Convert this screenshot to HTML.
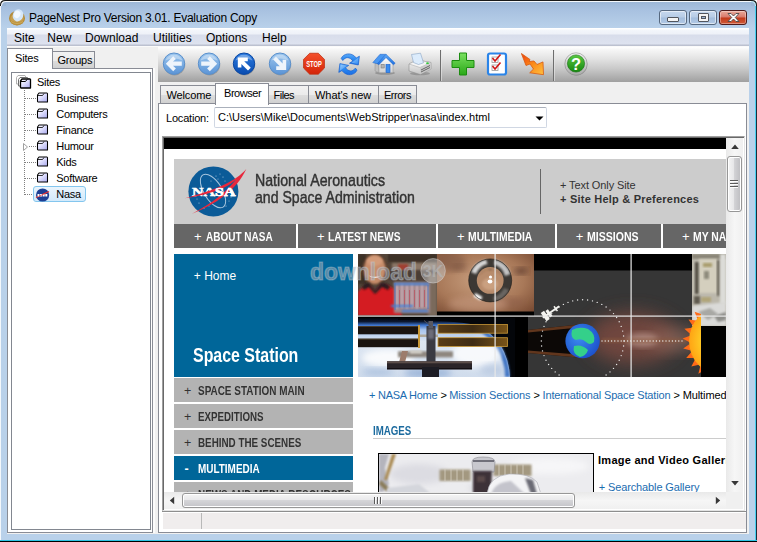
<!DOCTYPE html>
<html>
<head>
<meta charset="utf-8">
<title>PageNest Pro</title>
<style>
html,body{margin:0;padding:0;}
body{width:757px;height:542px;overflow:hidden;background:#b9d1ea;font-family:"Liberation Sans",sans-serif;font-size:11px;color:#000;position:relative;}
div,span{position:absolute;box-sizing:border-box;}
span{white-space:nowrap}
/* frame */
#titlegrad{left:0;top:0;width:757px;height:28px;background:linear-gradient(#9ab5d5 0,#a8c1e0 35%,#b9d1ea 100%);}
#frameL{left:0;top:0;width:1px;height:541px;background:#f4f8fc}
#frameT{left:0;top:0;width:757px;height:1px;background:#1a1a1a}
#frameT2{left:1px;top:1px;width:755px;height:1px;background:#f4f8fc}
#frameR{left:756px;top:0;width:1px;height:542px;background:#1c2c3c}
#frameR2{left:755px;top:2px;width:1px;height:539px;background:#48d0f0}
#frameB{left:0;top:540px;width:757px;height:1px;background:#2cc4e4}
#frameB2{left:0;top:541px;width:757px;height:1px;background:#000}
#title{left:29px;top:9.500px;font-size:12px;line-height:16px;color:#000;letter-spacing:-0.26px}
#menubar{left:7px;top:28px;width:742px;height:18px;background:linear-gradient(#ffffff 0,#ffffff 1px,#f3f6fb 2px,#eef1f8 6px,#d8ddeb 7px,#dde2ef 16px,#bcc1d0 17px,#bcc1d0 18px);}
#menubar span{top:3px;font-size:12px;line-height:15px;}
#client{left:7px;top:46px;width:742px;height:488px;background:#f0f0f0;border-top:1px solid #fafafa}
.t11{font-size:11px;line-height:13px;}
/* left panel */
#ltabSites{left:7px;top:48px;width:46px;height:21px;background:#fff;border:1px solid #898c95;border-bottom:none;z-index:3}
#ltabGroups{left:52px;top:51px;width:43px;height:18px;background:linear-gradient(#f2f2f2 0,#ebebeb 50%,#dddddd 50%,#cfcfcf 100%);border:1px solid #898c95;border-bottom:none;}
#lpanel{left:7px;top:68px;width:146px;height:465px;background:#fff;border:1px solid #898c95;}
#tree{left:11px;top:72px;width:140px;height:458px;background:#fff;border:1px solid #828790;}
.ti{left:0;height:16px;font-size:11px;line-height:16px;}
/* right */
#toolbar{left:158px;top:47px;width:591px;height:35.300px;background:linear-gradient(#ffffff 0,#f6f6f6 8%,#e4e4e4 32%,#cbcbcb 60%,#b0b0b0 85%,#a0a0a0 100%);}
#rpanel{left:158px;top:103px;width:589px;height:430px;background:#fff;border:1px solid #898c95;}
.rtab{top:85px;height:19px;background:linear-gradient(#f2f2f2 0,#ebebeb 50%,#dddddd 50%,#cfcfcf 100%);border:1px solid #898c95;border-bottom:none;font-size:11px;line-height:16px;text-align:center;white-space:nowrap}
.rtab.act{top:83px;height:22px;background:#fff;z-index:3;}
.rtab span{top:3px;font-size:11px;line-height:13px}

.fold{width:11px;height:9px;}
.tl{font-size:11px;line-height:13px;letter-spacing:-0.3px}
.hdot{height:1px;background-image:linear-gradient(90deg,#808080 1px,transparent 1px);background-size:2px 1px;}
.vdot{width:1px;background-image:linear-gradient(#808080 1px,transparent 1px);background-size:1px 2px;}

/* browser */
#loc{left:166px;top:112px;font-size:11px;line-height:13px;letter-spacing:-0.2px}
#combo{left:214px;top:107px;width:333px;height:21px;background:#fff;border:1px solid #d0d7e3;border-top-color:#aab0bb;border-radius:2px}
#combo span{left:3px;top:3px;font-size:11px;line-height:13px}
#bview{left:162px;top:136px;width:583px;height:375px;background:#fff;border:1px solid #a0a0a0;border-right-color:#e3e3e3;border-bottom-color:#e3e3e3;box-shadow:inset 1px 1px 0 #696969}
#page{left:164px;top:138px;width:562px;height:354px;background:#fff;overflow:hidden}
#page div,#page span{position:absolute}
.cond{transform-origin:0 50%;display:inline-block}
.nav{top:86px;height:24.400px;background:#666;}
.hd{font-size:17px;line-height:18px;color:#333;transform-origin:0 50%;-webkit-text-stroke:0.45px #333}
.nav span{color:#fff;font-weight:bold;font-size:13px;line-height:25px;top:0;transform-origin:0 50%;transform:scaleX(0.8)}
.nav .p{font-weight:normal;transform:none}
.lm{left:10px;width:179px;height:24px;background:#b3b3b3}
.lm span{top:1px;line-height:24px;font-size:12.500px;font-weight:bold;color:#333;transform-origin:0 50%;}
.lm .p{left:10px;font-weight:normal}
.lm .t{left:24px}
.bc{font-size:11px;line-height:13px;color:#1b6cb0;letter-spacing:-0.17px}
.bc i{font-style:normal;color:#000}

/* scrollbars */
.sbv{left:726px;top:138px;width:17px;height:354px;background:linear-gradient(90deg,#e9e9e9,#f6f6f6 50%,#f0f0f0)}
.sbh{left:164px;top:492px;width:562px;height:17px;background:linear-gradient(#e9e9e9,#f6f6f6 50%,#f0f0f0)}
.thv{left:727px;top:156px;width:15px;height:56px;border:1px solid #979797;border-radius:3px;background:linear-gradient(90deg,#f5f5f5 0,#e6e6e8 45%,#d2d2d5 50%,#bcbcc0 100%);box-shadow:inset 0 0 0 1px #fff}
.thh{left:182px;top:493px;width:393px;height:15px;border:1px solid #979797;border-radius:3px;background:linear-gradient(#f5f5f5 0,#e9e9eb 45%,#d5d5d8 50%,#c4c4c8 100%);box-shadow:inset 0 0 0 1px #fff}
#status{left:163px;top:513px;width:583px;height:16px;background:#f0eded}

.wb{top:10px;height:15px;border:1px solid #56687f;border-radius:3px;background:linear-gradient(#c6d8ee 0,#b7cce6 48%,#a3bddc 52%,#b3cae6 100%);box-shadow:inset 0 0 0 1px rgba(255,255,255,.55)}
.wb.cl{border-color:#4e1a1a;background:linear-gradient(#e9a99a 0,#d8796a 48%,#c2391a 52%,#cf5a38 100%);box-shadow:inset 0 0 0 1px rgba(255,255,255,.35)}
</style>
</head>
<body>
<div id="titlegrad"></div>
<div id="frameR2"></div>

<div class="wb" style="left:659px;width:28px"><div style="left:7px;top:6px;width:12px;height:5px;background:#f4f4f4;border:1px solid #52565e;border-radius:1px"></div></div>
<div class="wb" style="left:689px;width:28px"><div style="left:8px;top:2px;width:11px;height:9px;background:#f4f4f4;border:1px solid #52565e;border-radius:1px"></div><div style="left:11px;top:5px;width:5px;height:3px;background:#9db4d4;border:1px solid #52565e"></div></div>
<div class="wb cl" style="left:719px;width:28px"><svg style="position:absolute;left:7px;top:1px" width="13" height="11" viewBox="0 0 13 11"><path d="M1 1.500 L4 1.500 L6.500 4 L9 1.500 L12 1.500 L8.300 5.500 L12 9.500 L9 9.500 L6.500 7 L4 9.500 L1 9.500 L4.700 5.500z" fill="#fff" stroke="#4a4a4a" stroke-width="0.900" stroke-linejoin="round"/></svg></div>
<svg style="position:absolute;left:8px;top:8px" width="18" height="18" viewBox="0 0 18 18">
<ellipse cx="9" cy="10.200" rx="8" ry="7.200" fill="#b48c3c"/>
<ellipse cx="9" cy="11" rx="6.800" ry="5.800" fill="#c8a050"/>
<ellipse cx="10" cy="7.300" rx="5.200" ry="6.200" fill="#d4e6f8" transform="rotate(18 10 7.300)"/>
<ellipse cx="9.200" cy="6.300" rx="3.200" ry="3.800" fill="#f2f8ff" transform="rotate(18 9.200 6.300)"/>
<path d="M1.300 10.500 Q2.500 17 9 17.300 Q15.500 17 16.800 10.500 Q14 14.300 9 14.300 Q4 14.300 1.300 10.500z" fill="#b8903e"/>
<path d="M3 13.500 Q9 17.500 15 13.500" stroke="#d8b868" stroke-width="0.700" fill="none"/>
</svg>
<span id="title">PageNest Pro Version 3.01. Evaluation Copy</span>
<div id="menubar">
  <span style="left:7px">Site</span>
  <span style="left:40.300px">New</span>
  <span style="left:78px">Download</span>
  <span style="left:146px">Utilities</span>
  <span style="left:199px">Options</span>
  <span style="left:255px">Help</span>
</div>
<div id="client"></div>
<!--LEFT-->
<div id="ltabSites"><span class="t11" style="left:7px;top:3px;letter-spacing:-0.2px">Sites</span></div>
<div id="ltabGroups"><span class="t11" style="left:4.400px;top:2px;letter-spacing:-0.2px">Groups</span></div>
<div style="left:153px;top:68px;width:2px;height:465px;background:#fbfbfb"></div>
<div id="lpanel"></div>
<div id="tree"></div>
<svg style="position:absolute;left:15px;top:74px" width="18" height="16" viewBox="0 0 18 16">
<defs><linearGradient id="fgr" x1="0" y1="0" x2="1" y2="1"><stop offset="0" stop-color="#ffffff"/><stop offset="0.35" stop-color="#e8e8ff"/><stop offset="1" stop-color="#a8a8ee"/></linearGradient></defs>
<path d="M1.500 3.500 L3 1.500 L10 1.500 L10.500 2 L10.500 10 L1.500 10z" fill="#fff" stroke="#b0b0b0" stroke-width="1"/>
<path d="M3.500 5.500 L5 3.500 L12.500 3.500 L13 4 L13 12 L3.500 12z" fill="#fff" stroke="#707070" stroke-width="1"/>
<path d="M5.500 7 L7 5 L15 5 L15.500 5.500 L15.500 14 L6 14 L5.500 13.500z" fill="url(#fgr)" stroke="#000" stroke-width="1.300" stroke-linejoin="round"/>
<path d="M6 7.500 H10.500 L12 5.500" stroke="#000" stroke-width="1" fill="none"/>
</svg>
<span class="tl" style="left:37px;top:76px">Sites</span>
<div class="vdot" style="left:24px;top:90px;height:105px"></div>
<div class="hdot" style="left:25px;top:98px;width:11px"></div>
<svg style="position:absolute;left:36px;top:92px" width="13" height="11" viewBox="0 0 13 11"><defs><linearGradient id="fg0" x1="0" y1="0" x2="1" y2="1"><stop offset="0" stop-color="#ffffff"/><stop offset="0.35" stop-color="#e8e8ff"/><stop offset="1" stop-color="#a8a8ee"/></linearGradient></defs><path d="M1.500 3 L3 1 L11 1 L11.500 1.500 L11.500 10 L2 10 L1.500 9.500z" fill="url(#fg0)" stroke="#000" stroke-width="1.050" stroke-linejoin="round"/><path d="M2 3.500 H6.500 L8 1.500" stroke="#000" stroke-width="0.800" fill="none"/></svg>
<span class="tl" style="left:56.300px;top:92px">Business</span>
<div class="hdot" style="left:25px;top:114px;width:11px"></div>
<svg style="position:absolute;left:36px;top:108px" width="13" height="11" viewBox="0 0 13 11"><defs><linearGradient id="fg1" x1="0" y1="0" x2="1" y2="1"><stop offset="0" stop-color="#ffffff"/><stop offset="0.35" stop-color="#e8e8ff"/><stop offset="1" stop-color="#a8a8ee"/></linearGradient></defs><path d="M1.500 3 L3 1 L11 1 L11.500 1.500 L11.500 10 L2 10 L1.500 9.500z" fill="url(#fg1)" stroke="#000" stroke-width="1.050" stroke-linejoin="round"/><path d="M2 3.500 H6.500 L8 1.500" stroke="#000" stroke-width="0.800" fill="none"/></svg>
<span class="tl" style="left:56.300px;top:108px">Computers</span>
<div class="hdot" style="left:25px;top:130px;width:11px"></div>
<svg style="position:absolute;left:36px;top:124px" width="13" height="11" viewBox="0 0 13 11"><defs><linearGradient id="fg2" x1="0" y1="0" x2="1" y2="1"><stop offset="0" stop-color="#ffffff"/><stop offset="0.35" stop-color="#e8e8ff"/><stop offset="1" stop-color="#a8a8ee"/></linearGradient></defs><path d="M1.500 3 L3 1 L11 1 L11.500 1.500 L11.500 10 L2 10 L1.500 9.500z" fill="url(#fg2)" stroke="#000" stroke-width="1.050" stroke-linejoin="round"/><path d="M2 3.500 H6.500 L8 1.500" stroke="#000" stroke-width="0.800" fill="none"/></svg>
<span class="tl" style="left:56.300px;top:124px">Finance</span>
<div class="hdot" style="left:25px;top:146px;width:11px"></div>
<svg style="position:absolute;left:36px;top:140px" width="13" height="11" viewBox="0 0 13 11"><defs><linearGradient id="fg3" x1="0" y1="0" x2="1" y2="1"><stop offset="0" stop-color="#ffffff"/><stop offset="0.35" stop-color="#e8e8ff"/><stop offset="1" stop-color="#a8a8ee"/></linearGradient></defs><path d="M1.500 3 L3 1 L11 1 L11.500 1.500 L11.500 10 L2 10 L1.500 9.500z" fill="url(#fg3)" stroke="#000" stroke-width="1.050" stroke-linejoin="round"/><path d="M2 3.500 H6.500 L8 1.500" stroke="#000" stroke-width="0.800" fill="none"/></svg>
<span class="tl" style="left:56.300px;top:140px">Humour</span>
<div class="hdot" style="left:25px;top:162px;width:11px"></div>
<svg style="position:absolute;left:36px;top:156px" width="13" height="11" viewBox="0 0 13 11"><defs><linearGradient id="fg4" x1="0" y1="0" x2="1" y2="1"><stop offset="0" stop-color="#ffffff"/><stop offset="0.35" stop-color="#e8e8ff"/><stop offset="1" stop-color="#a8a8ee"/></linearGradient></defs><path d="M1.500 3 L3 1 L11 1 L11.500 1.500 L11.500 10 L2 10 L1.500 9.500z" fill="url(#fg4)" stroke="#000" stroke-width="1.050" stroke-linejoin="round"/><path d="M2 3.500 H6.500 L8 1.500" stroke="#000" stroke-width="0.800" fill="none"/></svg>
<span class="tl" style="left:56.300px;top:156px">Kids</span>
<div class="hdot" style="left:25px;top:178px;width:11px"></div>
<svg style="position:absolute;left:36px;top:172px" width="13" height="11" viewBox="0 0 13 11"><defs><linearGradient id="fg5" x1="0" y1="0" x2="1" y2="1"><stop offset="0" stop-color="#ffffff"/><stop offset="0.35" stop-color="#e8e8ff"/><stop offset="1" stop-color="#a8a8ee"/></linearGradient></defs><path d="M1.500 3 L3 1 L11 1 L11.500 1.500 L11.500 10 L2 10 L1.500 9.500z" fill="url(#fg5)" stroke="#000" stroke-width="1.050" stroke-linejoin="round"/><path d="M2 3.500 H6.500 L8 1.500" stroke="#000" stroke-width="0.800" fill="none"/></svg>
<span class="tl" style="left:56.300px;top:172px">Software</span>
<svg style="position:absolute;left:22px;top:141.500px" width="7" height="10" viewBox="0 0 7 10"><rect x="0" y="0" width="7" height="10" fill="#fff"/><path d="M1.500 1.500 L5.500 5 L1.500 8.500z" fill="#fff" stroke="#a0a0a0" stroke-width="1"/></svg>
<div class="hdot" style="left:25px;top:194px;width:8px"></div>
<div style="left:33px;top:186px;width:53px;height:16px;border:1px solid #84c6ee;border-radius:3px;background:linear-gradient(#ebf5fd,#d3eafb)"></div>
<svg style="position:absolute;left:35px;top:187.500px" width="15" height="15" viewBox="0 0 15 15"><circle cx="7.600" cy="7" r="6.600" fill="#1c3f94"/><path d="M1 9.500 L14 3.500" stroke="#e83030" stroke-width="1.100"/><path d="M2.500 7.300h10.200" stroke="#fff" stroke-width="2.400" stroke-dasharray="2 0.600"/><path d="M4 8.200 L11 5.200" stroke="#e83030" stroke-width="0.700"/></svg>
<span class="tl" style="left:56.300px;top:188px">Nasa</span>
<!--RIGHT-->
<div id="toolbar"></div>
<svg style="position:absolute;left:162px;top:52px" width="24" height="24" viewBox="0 0 24 24">
<defs><linearGradient id="g1" x1="0" y1="0" x2="0" y2="1"><stop offset="0" stop-color="#9cc6ee"/><stop offset="1" stop-color="#5b94d6"/></linearGradient></defs>
<ellipse cx="12.500" cy="12.800" rx="10.800" ry="10.600" fill="#000" opacity="0.18"/>
<circle cx="12" cy="11.700" r="10.700" fill="url(#g1)" stroke="#5a90cc" stroke-width="1"/>
<path d="M3.500 8.500 A9.200 9.200 0 0 1 20.500 8.500 A14 9 0 0 0 3.500 8.500z" fill="#fff" opacity="0.35"/>
<path d="M3.800 11.700 L11.200 4.200 L13.900 6.900 L11 9.600 L19.800 9.600 L19.800 13.800 L11 13.800 L13.900 16.500 L11.200 19.200z" fill="#eef4fb"/>
</svg>
<svg style="position:absolute;left:197.3px;top:52px" width="24" height="24" viewBox="0 0 24 24">
<defs><linearGradient id="g2" x1="0" y1="0" x2="0" y2="1"><stop offset="0" stop-color="#9cc6ee"/><stop offset="1" stop-color="#5b94d6"/></linearGradient></defs>
<ellipse cx="12.500" cy="12.800" rx="10.800" ry="10.600" fill="#000" opacity="0.18"/>
<circle cx="12" cy="11.700" r="10.700" fill="url(#g2)" stroke="#5a90cc" stroke-width="1"/>
<path d="M3.500 8.500 A9.200 9.200 0 0 1 20.500 8.500 A14 9 0 0 0 3.500 8.500z" fill="#fff" opacity="0.35"/>
<path d="M20.200 11.700 L12.800 4.200 L10.100 6.900 L13 9.600 L4.200 9.600 L4.200 13.800 L13 13.800 L10.100 16.500 L12.800 19.200z" fill="#eef4fb"/>
</svg>
<svg style="position:absolute;left:232.3px;top:52px" width="24" height="24" viewBox="0 0 24 24">
<defs><linearGradient id="g3" x1="0" y1="0" x2="0" y2="1"><stop offset="0" stop-color="#2a7ae0"/><stop offset="1" stop-color="#0a4cb0"/></linearGradient></defs>
<ellipse cx="12.500" cy="12.800" rx="10.800" ry="10.600" fill="#000" opacity="0.18"/>
<circle cx="12" cy="11.700" r="10.700" fill="url(#g3)" stroke="#0a48a4" stroke-width="1"/>
<path d="M3.500 8.500 A9.200 9.200 0 0 1 20.500 8.500 A14 9 0 0 0 3.500 8.500z" fill="#fff" opacity="0.35"/>
<path d="M5.800 5.500 L15.800 5.500 L15.800 9.200 L12.200 9.200 L18.800 15.800 L16 18.600 L9.400 12 L9.400 15.600 L5.800 15.600z" fill="#ffffff"/>
</svg>
<svg style="position:absolute;left:267.5px;top:52px" width="24" height="24" viewBox="0 0 24 24">
<defs><linearGradient id="g4" x1="0" y1="0" x2="0" y2="1"><stop offset="0" stop-color="#9cc6ee"/><stop offset="1" stop-color="#5b94d6"/></linearGradient></defs>
<ellipse cx="12.500" cy="12.800" rx="10.800" ry="10.600" fill="#000" opacity="0.18"/>
<circle cx="12" cy="11.700" r="10.700" fill="url(#g4)" stroke="#5a90cc" stroke-width="1"/>
<path d="M3.500 8.500 A9.200 9.200 0 0 1 20.500 8.500 A14 9 0 0 0 3.500 8.500z" fill="#fff" opacity="0.35"/>
<path d="M18.200 17.900 L8.200 17.900 L8.200 14.200 L11.800 14.200 L5.200 7.600 L8 4.800 L14.600 11.400 L14.600 7.800 L18.200 7.800z" fill="#eef4fb"/>
</svg>
<svg style="position:absolute;left:302.4px;top:52px" width="24" height="24" viewBox="0 0 24 24">
<defs><linearGradient id="gs" x1="0" y1="0" x2="0" y2="1"><stop offset="0" stop-color="#f4502c"/><stop offset="1" stop-color="#d42408"/></linearGradient></defs>
<polygon points="22.44,16.02 16.32,22.14 7.68,22.14 1.56,16.02 1.56,7.38 7.68,1.26 16.32,1.26 22.44,7.38" fill="url(#gs)" stroke="#c03010" stroke-width="0.800"/>
<text x="12" y="15.100" font-family="Liberation Sans, sans-serif" font-weight="bold" font-size="9.500" fill="#fff" text-anchor="middle" textLength="15.500" lengthAdjust="spacingAndGlyphs">STOP</text>
</svg>
<svg style="position:absolute;left:337.400px;top:52px" width="24" height="25" viewBox="0 0 24 25">
<defs><linearGradient id="grf" x1="0" y1="0" x2="0" y2="1"><stop offset="0" stop-color="#5aaaf8"/><stop offset="0.5" stop-color="#2a88f0"/><stop offset="1" stop-color="#1a6ce4"/></linearGradient>
<linearGradient id="grf2" x1="0" y1="0" x2="1" y2="1"><stop offset="0" stop-color="#a8d4ff"/><stop offset="1" stop-color="#3a94f4"/></linearGradient></defs>
<path d="M4.200 6.500 C6 1.500 14.500 -0.500 19.300 6 L22.400 4.200 L21.300 13 L12.500 11.200 L15.800 9 C13 4.800 8.500 4.500 5.800 8.500z" fill="url(#grf)" stroke="#1a62d0" stroke-width="0.700" stroke-linejoin="round"/>
<path d="M21.600 5.500 L20.700 12 L14.500 10.800 L19.500 7z" fill="url(#grf2)" opacity="0.8"/>
<path d="M20 18.100 C18.200 23.100 9.700 25.100 4.900 18.600 L1.800 20.400 L2.900 11.600 L11.700 13.400 L8.400 15.600 C11.200 19.800 15.700 20.100 18.400 16.100z" fill="url(#grf)" stroke="#1a62d0" stroke-width="0.700" stroke-linejoin="round"/>
<path d="M3.600 12.600 L9.700 13.800 L4.700 17.600 L2.700 19z" fill="url(#grf2)" opacity="0.8"/>
</svg>
<svg style="position:absolute;left:372.400px;top:52px" width="24" height="24" viewBox="0 0 24 24">
<defs><linearGradient id="ghw" x1="0" y1="0" x2="0" y2="1"><stop offset="0" stop-color="#ffffff"/><stop offset="1" stop-color="#d0d0d0"/></linearGradient>
<linearGradient id="ghr" x1="0" y1="0" x2="0" y2="1"><stop offset="0" stop-color="#62acf8"/><stop offset="1" stop-color="#1a6ee0"/></linearGradient></defs>
<ellipse cx="13" cy="21" rx="10" ry="1.800" fill="#000" opacity="0.2"/>
<path d="M3 11 L3 19 L7 20.800 L7 12z" fill="#bdbdbd" stroke="#909090" stroke-width="0.500"/>
<path d="M14 5 L21 12 L21 20.800 L7 20.800 L7 12z" fill="url(#ghw)" stroke="#9a9a9a" stroke-width="0.600"/>
<path d="M8 2.300 L14 2.300 L5.600 11.800 L0.800 10.600z" fill="#4a98f2" stroke="#1c62cc" stroke-width="0.500" stroke-linejoin="round"/>
<path d="M14 2.300 L23.200 11.200 L21.400 12.800 L14 5.600 L6.800 12.800 L5.400 11.600z" fill="url(#ghr)" stroke="#1c62cc" stroke-width="0.500" stroke-linejoin="round"/>
<rect x="14" y="12.400" width="4" height="8.200" fill="#3a8cee" stroke="#1c62cc" stroke-width="0.600"/>
<rect x="9" y="12.400" width="3.200" height="3.600" fill="#b4b4b4" stroke="#7a7a7a" stroke-width="0.600"/>
</svg>
<svg style="position:absolute;left:407.700px;top:52px" width="24" height="24" viewBox="0 0 24 24">
<defs><linearGradient id="gpb" x1="0" y1="0" x2="0" y2="1"><stop offset="0" stop-color="#fafafa"/><stop offset="1" stop-color="#c4c4c4"/></linearGradient></defs>
<ellipse cx="12" cy="21.500" rx="10" ry="1.800" fill="#000" opacity="0.18"/>
<path d="M1 12 L9 8 L23 10.500 L23 17 L12 22.500 L1 19z" fill="url(#gpb)" stroke="#8e8e8e" stroke-width="0.600" stroke-linejoin="round"/>
<path d="M1 12 L12 15.500 L23 10.500 L9 8z" fill="#f4f4f4" stroke="#a0a0a0" stroke-width="0.500"/>
<path d="M12 15.500 L12 22.500 L23 17 L23 10.500z" fill="#c8c8c8" opacity="0.8"/>
<path d="M13 18 L22 13.500 M13 20 L22 15.500" stroke="#5a5a5a" stroke-width="0.900"/>
<path d="M5.500 10.500 L3.500 2.500 L12.500 1.200 L15.500 10.800 L10.500 12.500z" fill="#dcecfc" stroke="#8aa4c4" stroke-width="0.600" stroke-linejoin="round"/>
<ellipse cx="19.500" cy="11.200" rx="1.400" ry="0.900" fill="#30c838"/>
</svg>
<div style="left:440px;top:50px;width:1px;height:31px;background:#6e6e6e"></div><div style="left:441px;top:50px;width:1px;height:31px;background:#e8e8e8;opacity:.6"></div>
<div style="left:553px;top:50px;width:1px;height:31px;background:#6e6e6e"></div><div style="left:554px;top:50px;width:1px;height:31px;background:#e8e8e8;opacity:.6"></div>
<svg style="position:absolute;left:450.5px;top:52px" width="24" height="24" viewBox="0 0 24 24">
<defs><linearGradient id="gp" x1="0" y1="0" x2="0" y2="1"><stop offset="0" stop-color="#7ae060"/><stop offset="1" stop-color="#2aa818"/></linearGradient></defs>
<path d="M8.500 1 h7 v7.500 h7.500 v7 h-7.500 v7.500 h-7 v-7.500 h-7.500 v-7 h7.500z" fill="url(#gp)" stroke="#1c8c10" stroke-width="1"/>
</svg>
<svg style="position:absolute;left:485.3px;top:52px" width="24" height="24" viewBox="0 0 24 24">
<rect x="3" y="1.500" width="18" height="21" rx="2" fill="#fff" stroke="#2a84e8" stroke-width="2.200"/>
<rect x="7" y="5" width="6" height="5.500" fill="#fff" stroke="#999" stroke-width="0.800"/>
<rect x="7" y="13" width="6" height="5.500" fill="#fff" stroke="#999" stroke-width="0.800"/>
<path d="M7.500 6 L10 9 L15.500 2.500" fill="none" stroke="#d01818" stroke-width="1.600"/>
<path d="M7.500 14 L10 17 L15.500 10.500" fill="none" stroke="#d01818" stroke-width="1.600"/>
</svg>
<svg style="position:absolute;left:520.5px;top:52px" width="24" height="24" viewBox="0 0 24 24">
<defs><linearGradient id="go" x1="0" y1="0" x2="1" y2="1"><stop offset="0" stop-color="#f04010"/><stop offset="0.500" stop-color="#fb8a18"/><stop offset="1" stop-color="#ffc040"/></linearGradient></defs>
<path d="M0.400 1.500 L9 7.500 L8 9.500 L13 9 L16 12.500 L22 9.900 L22.500 22.700 L8.700 20.800 L12.500 17 L9 12 L5 13.500z" fill="url(#go)" stroke="#d85a10" stroke-width="0.800"/>
</svg>
<svg style="position:absolute;left:563.6px;top:52px" width="24" height="24" viewBox="0 0 24 24">
<defs><linearGradient id="gh" x1="0" y1="0" x2="0" y2="1"><stop offset="0" stop-color="#58c840"/><stop offset="1" stop-color="#168810"/></linearGradient>
<linearGradient id="gr" x1="0" y1="0" x2="0" y2="1"><stop offset="0" stop-color="#f4f4f4"/><stop offset="1" stop-color="#a8a8a8"/></linearGradient></defs>
<circle cx="12.500" cy="12.700" r="10.800" fill="#000" opacity="0.2"/>
<circle cx="12" cy="12" r="11.200" fill="url(#gr)" stroke="#8c8c8c" stroke-width="0.600"/>
<circle cx="12" cy="11.500" r="8.600" fill="url(#gh)" stroke="#147010" stroke-width="0.600"/>
<text x="12" y="17.600" font-family="Liberation Sans, sans-serif" font-weight="bold" font-size="16.500" fill="#fff" text-anchor="middle">?</text>
</svg>
<div class="rtab" style="left:160px;width:56px"><span style="left:5.400px;letter-spacing:-0.1px">Welcome</span></div>
<div class="rtab act" style="left:215px;width:54px"><span style="left:8px;top:3px;letter-spacing:-0.45px">Browser</span></div>
<div class="rtab" style="left:268px;width:41px"><span style="left:4.600px;letter-spacing:-0.55px">Files</span></div>
<div class="rtab" style="left:308px;width:71px"><span style="left:6px;letter-spacing:-0.03px">What's new</span></div>
<div class="rtab" style="left:378px;width:39px"><span style="left:5px;letter-spacing:-0.5px">Errors</span></div>
<div id="rpanel"></div>

<div id="rpanelc"></div>
<span id="loc">Location:</span>
<div id="combo"><span>C:\Users\Mike\Documents\WebStripper\nasa\index.html</span>
<svg style="position:absolute;left:319.500px;top:8px" width="9" height="5" viewBox="0 0 9 5"><path d="M0.500 0.500h8L4.500 4.500z" fill="#000"/></svg></div>
<div id="bview"></div>
<div id="page">
 <div style="left:0;top:0;width:562px;height:10.500px;background:#000"></div>
 <div style="left:10px;top:21px;width:560px;height:65px;background:#ccc"></div>
<svg style="position:absolute;left:20px;top:26px" width="66" height="56" viewBox="0 0 66 56">
<circle cx="29.400" cy="27.400" r="25" fill="#0b5b98"/>
<g fill="#cfe0f0" opacity="0.8"><circle cx="32" cy="12" r="0.600"/><circle cx="36" cy="10" r="0.500"/><circle cx="39" cy="13" r="0.600"/><circle cx="34" cy="15" r="0.500"/><circle cx="27" cy="17" r="0.500"/><circle cx="41" cy="17" r="0.500"/><circle cx="15" cy="39" r="0.600"/><circle cx="20" cy="44" r="0.700"/><circle cx="25" cy="42" r="0.500"/><circle cx="45" cy="37" r="0.500"/><circle cx="42" cy="42" r="0.600"/><circle cx="47" cy="33" r="0.500"/><circle cx="13" cy="35" r="0.500"/></g>
<ellipse cx="29" cy="27" rx="9" ry="19" fill="none" stroke="#b8d0e6" stroke-width="1" transform="rotate(-32 29 27)" opacity="0.9"/>
<text x="8" y="32" font-family="Liberation Serif, serif" font-weight="bold" font-size="13" fill="#fff" textLength="43.500" lengthAdjust="spacingAndGlyphs" stroke="#fff" stroke-width="0.500">NASA</text>
<path d="M62.300 5.100 C52 17 32 26 1 34.300 C30 29.500 44 23.500 52.500 15 C42 28 28 39.500 8 49.700 C30 41.500 53 26 62.300 5.100z" fill="#e8283c"/>
<clipPath id="cpn"><rect x="30" y="0" width="40" height="56"/></clipPath>
<text x="8" y="32" clip-path="url(#cpn)" font-family="Liberation Serif, serif" font-weight="bold" font-size="13" fill="#fff" textLength="43.500" lengthAdjust="spacingAndGlyphs" stroke="#fff" stroke-width="0.500">NASA</text>
</svg>
 <span class="hd" style="left:90.700px;top:34px;transform:scaleX(0.834)">National Aeronautics</span>
 <span class="hd" style="left:90.700px;top:51px;transform:scaleX(0.829)">and Space Administration</span>
 <div style="left:376px;top:31px;width:1px;height:45px;background:#666"></div>
 <span style="left:396px;top:41px;font-size:11px;line-height:13px;color:#333;letter-spacing:-0.1px">+ Text Only Site</span>
 <span style="left:396px;top:54.700px;font-size:11px;line-height:13px;color:#333;font-weight:bold;letter-spacing:0.22px">+ Site Help &amp; Preferences</span>
 <div class="nav" style="left:10px;width:122px"><span class="p" style="left:20px">+</span><span style="left:32.2px;transform:scaleX(0.77)">ABOUT NASA</span></div>
 <div class="nav" style="left:134px;width:138px"><span class="p" style="left:19px">+</span><span style="left:30px;transform:scaleX(0.787)">LATEST NEWS</span></div>
 <div class="nav" style="left:274px;width:117px"><span class="p" style="left:19px">+</span><span style="left:30.2px;transform:scaleX(0.797)">MULTIMEDIA</span></div>
 <div class="nav" style="left:393px;width:104px"><span class="p" style="left:18.7px">+</span><span style="left:30.3px;transform:scaleX(0.812)">MISSIONS</span></div>
 <div class="nav" style="left:499px;width:104px"><span class="p" style="left:18.9px">+</span><span style="left:30.1px;transform:scaleX(0.8)">MY NASA</span></div>
 <div style="left:10px;top:116px;width:179px;height:123px;background:#069"></div>
 <span style="left:29.800px;top:130.500px;font-size:12px;line-height:14px;color:#fff">+ Home</span>
 <span style="left:29.300px;top:205px;font-size:19.500px;line-height:24px;color:#fff;font-weight:bold;transform-origin:0 50%;transform:scaleX(0.817)">Space Station</span>
 <div class="lm" style="top:240px"><span class="p">+</span><span class="t" style="transform:scaleX(0.795)">SPACE STATION MAIN</span></div>
 <div class="lm" style="top:266px"><span class="p">+</span><span class="t" style="transform:scaleX(0.78)">EXPEDITIONS</span></div>
 <div class="lm" style="top:292px"><span class="p">+</span><span class="t" style="transform:scaleX(0.787)">BEHIND THE SCENES</span></div>
 <div class="lm" style="top:318px;background:#069"><span class="p" style="left:10.500px;color:#fff;font-weight:bold">-</span><span class="t" style="color:#fff;transform:scaleX(0.795)">MULTIMEDIA</span></div>
 <div class="lm" style="top:344px"><span class="p">+</span><span class="t" style="transform:scaleX(0.79)">NEWS AND MEDIA RESOURCES</span></div>
<svg style="position:absolute;left:194px;top:116px" width="368" height="123" viewBox="0 0 368 123">
<defs>
<filter id="b1" x="-20%" y="-20%" width="140%" height="140%"><feGaussianBlur stdDeviation="1.2"/></filter>
<filter id="b2" x="-20%" y="-20%" width="140%" height="140%"><feGaussianBlur stdDeviation="3"/></filter>
<filter id="b3" x="-50%" y="-50%" width="200%" height="200%"><feGaussianBlur stdDeviation="9"/></filter>
<radialGradient id="skin" cx="0.45" cy="0.45" r="0.75"><stop offset="0" stop-color="#c9a080"/><stop offset="0.6" stop-color="#a87858"/><stop offset="1" stop-color="#7a4c34"/></radialGradient>
<linearGradient id="cloud" x1="0" y1="0" x2="0" y2="1"><stop offset="0" stop-color="#04060c"/><stop offset="0.06" stop-color="#0c1830"/><stop offset="0.12" stop-color="#3a72cc"/><stop offset="0.2" stop-color="#a8c4ec"/><stop offset="0.4" stop-color="#dde6f2"/><stop offset="1" stop-color="#d0dcec"/></linearGradient>
<linearGradient id="pan" x1="0" y1="0" x2="1" y2="0"><stop offset="0" stop-color="#5a3c14"/><stop offset="0.5" stop-color="#3e2c14"/><stop offset="1" stop-color="#7a5418"/></linearGradient>
<radialGradient id="earth" cx="0.4" cy="0.4" r="0.7"><stop offset="0" stop-color="#3c8cf0"/><stop offset="1" stop-color="#1a4cc8"/></radialGradient>
<radialGradient id="sun" cx="0.5" cy="0.5" r="0.5"><stop offset="0" stop-color="#ffe040"/><stop offset="0.55" stop-color="#ffd428"/><stop offset="1" stop-color="#ffa414"/></radialGradient>
<clipPath id="cpm"><rect x="0" y="0" width="79" height="61.500"/></clipPath>
<clipPath id="cpb"><rect x="79" y="0" width="97" height="57.500"/></clipPath>
<clipPath id="cpi"><rect x="0" y="64" width="157" height="59"/></clipPath>
<clipPath id="cpr"><rect x="170" y="0" width="173" height="123"/></clipPath>
<clipPath id="cpt"><rect x="334" y="0" width="34" height="72"/></clipPath>
</defs>
<rect width="368" height="123" fill="#000"/>
<!-- man photo -->
<g clip-path="url(#cpm)">
<rect x="0" y="0" width="79" height="62" fill="#54453a"/>
<rect x="30" y="0" width="49" height="8" fill="#3c3028" filter="url(#b1)"/>
<rect x="34" y="9" width="45" height="7" fill="#8a7666" filter="url(#b1)"/>
<rect x="40" y="10" width="10" height="6" fill="#a04030" filter="url(#b1)"/>
<rect x="30" y="17" width="49" height="9" fill="#4a3c34" filter="url(#b1)"/>
<rect x="70" y="20" width="9" height="42" fill="#7a6a5c" filter="url(#b1)"/>
<rect x="0" y="0" width="8" height="30" fill="#3e3028" filter="url(#b1)"/>
<ellipse cx="16.800" cy="15" rx="12.500" ry="15.500" fill="#5a3c2a" filter="url(#b1)"/>
<ellipse cx="16.800" cy="15.500" rx="10.800" ry="14.500" fill="#c68c6a" filter="url(#b1)"/>
<ellipse cx="16.500" cy="7" rx="8" ry="5" fill="#d49c7a" filter="url(#b1)"/>
<path d="M10.500 21.500 Q16.800 26.500 23 21.500 Q16.800 24 10.500 21.500z" fill="#f4e8e0"/>
<path d="M9 13.500h5M19.500 13.500h5" stroke="#5a3828" stroke-width="1.200" filter="url(#b1)"/>
<path d="M0 38 Q5 31 12 32 L17 38 L23 31 Q31 30 37 36 L44 62 L0 62z" fill="#d41c22" filter="url(#b1)"/>
<path d="M4 33 Q8 28 11 29 L17 37 L23 29 Q28 28 32 33 L30 36 L24 33 L17 40 L11 33 L6 36z" fill="#2a1c20" filter="url(#b1)"/>
<rect x="36" y="28" width="36" height="31" fill="#9c8488" filter="url(#b1)"/>
<g stroke="#d8b8c0" stroke-width="1.800" filter="url(#b1)"><path d="M39 31v24M44 30v24M49 31v24M54 30v24M59 31v24M64 30v24M69 32v22"/></g>
<g stroke="#c04858" stroke-width="0.800" opacity="0.8"><path d="M41.500 36v17M46.500 36v17M51.500 36v17M56.500 36v17M61.500 36v17M66.500 36v17"/></g>
<path d="M36 30h35M33 52h22M44 57h26" stroke="#3f80d8" stroke-width="2" filter="url(#b1)"/>
<path d="M37 29v27M70 31v24" stroke="#4a78c0" stroke-width="1.200" opacity="0.8"/>
</g>
<!-- bubble photo -->
<g clip-path="url(#cpb)">
<rect x="79" y="0" width="97" height="58" fill="url(#skin)"/>
<ellipse cx="92" cy="8" rx="16" ry="9" fill="#7a5442" opacity="0.55" filter="url(#b2)"/>
<ellipse cx="163" cy="17" rx="7" ry="3" fill="#4a2c24" opacity="0.75" filter="url(#b2)"/>
<ellipse cx="101" cy="14" rx="8" ry="3" fill="#6a4434" opacity="0.5" filter="url(#b2)"/>
<ellipse cx="152" cy="48" rx="14" ry="5" fill="#8a5c48" opacity="0.5" filter="url(#b2)"/>
<ellipse cx="120" cy="50" rx="30" ry="8" fill="#c89c84" opacity="0.5" filter="url(#b2)"/>
<circle cx="132.200" cy="26.400" r="21.500" fill="#3c3834"/>
<path d="M113 18 A21 21 0 0 1 128 5.500 L129.500 10 A16 16 0 0 0 118 20z" fill="#d8d8d8" filter="url(#b1)"/>
<path d="M137 5.500 A21 21 0 0 1 152.500 20 L147 22 A16 16 0 0 0 136 10.500z" fill="#c4c4c4" filter="url(#b1)"/>
<path d="M151 36 A21 21 0 0 1 136 47.500 L135 43 A16 16 0 0 0 146 34z" fill="#6a6662" filter="url(#b1)"/>
<circle cx="132.200" cy="26.400" r="13.400" fill="#b88c6c"/>
<path d="M120 22 Q132 8 145 22 Q140 15 132 15 Q125 15 120 22z" fill="#5a4030" filter="url(#b1)"/>
<ellipse cx="132" cy="30" rx="8" ry="6" fill="#caa080" filter="url(#b1)"/>
<path d="M124 27h5M135 27h5" stroke="#4a3026" stroke-width="1.400" filter="url(#b1)"/>
<ellipse cx="132.500" cy="23" rx="1.600" ry="1.600" fill="#fff"/>
<ellipse cx="132" cy="27.500" rx="2.400" ry="2" fill="#fff"/>
<path d="M117.500 39 l7 4 l-2 3.600 l-7 -4.200z" fill="#fff" filter="url(#b1)"/>
<circle cx="132.200" cy="26.400" r="21.500" fill="none" stroke="#1c1a18" stroke-width="1" opacity="0.6"/>
</g>
<!-- ISS photo -->
<g clip-path="url(#cpi)">
<rect x="0" y="64" width="157" height="59" fill="url(#cloud)"/>
<path d="M40 64 L157 64 L157 123 L152 123 Q150 86 118 71 Q90 65.500 40 66z" fill="#04060a"/>
<path d="M118 71 Q150 86 152 123 L147 123 Q146 90 116 74z" fill="#3f74c4" filter="url(#b1)"/>
<ellipse cx="30" cy="104" rx="26" ry="9" fill="#ffffff" opacity="0.85" filter="url(#b2)"/>
<ellipse cx="118" cy="100" rx="24" ry="13" fill="#ffffff" opacity="0.8" filter="url(#b2)"/>
<ellipse cx="70" cy="119" rx="24" ry="5" fill="#90acd4" opacity="0.8" filter="url(#b2)"/>
<ellipse cx="20" cy="118" rx="16" ry="4" fill="#a4bcdc" opacity="0.7" filter="url(#b2)"/>
<ellipse cx="100" cy="86" rx="20" ry="4" fill="#b4c8e4" opacity="0.7" filter="url(#b2)"/>
<ellipse cx="134" cy="116" rx="12" ry="6" fill="#b8c8e0" opacity="0.7" filter="url(#b2)"/>
<rect x="0" y="72" width="62" height="8.300" fill="#1a1410"/>
<rect x="0" y="84.700" width="62" height="8.500" fill="#1a1410"/>
<rect x="0" y="72" width="62" height="1" fill="#4a3c28"/><rect x="0" y="84.700" width="62" height="1" fill="#4a3c28"/>
<rect x="60" y="71" width="2" height="23" fill="#c89838"/>
<rect x="80" y="70.400" width="69.500" height="8.800" fill="url(#pan)" stroke="#c89838" stroke-width="0.800"/>
<rect x="80" y="83.700" width="69.500" height="8.800" fill="url(#pan)" stroke="#c89838" stroke-width="0.800"/>
<rect x="62" y="80.500" width="18" height="2.500" fill="#b0a898"/>
<rect x="40" y="97.300" width="55" height="6" fill="#8e867e" filter="url(#b1)"/>
<rect x="52" y="96.500" width="12" height="3" fill="#d8d4cc" filter="url(#b1)"/>
<path d="M44 97 L40 112 L46 112 L50 97z" fill="#9c7c6c"/>
<rect x="68.500" y="72" width="9" height="51" fill="#3a3a42"/>
<rect x="70" y="75" width="6" height="10" fill="#6c6c78" filter="url(#b1)"/>
<rect x="70.500" y="67" width="4.500" height="7" fill="#585862"/>
<path d="M66 66.500 L73 72" stroke="#50505a" stroke-width="1"/>
<rect x="29" y="107.300" width="85" height="7.800" fill="#2a2428"/>
<rect x="29" y="107.300" width="85" height="2" fill="#5c4e4a"/>
<rect x="29" y="114" width="85" height="1.500" fill="#141014"/>
<rect x="64" y="113" width="17" height="10" fill="#1c1c24"/>
</g>
<!-- right diagram -->
<g clip-path="url(#cpr)">
<path d="M176 16.500 L343 16.500 L343 123 L170 123 L170 62 L176 62z" fill="#363636"/>
<ellipse cx="275" cy="84" rx="45" ry="26" fill="#7a4a40" opacity="0.85" filter="url(#b3)"/>
<ellipse cx="318" cy="86" rx="26" ry="10" fill="#a87a6a" opacity="0.6" filter="url(#b3)"/><ellipse cx="284" cy="86" rx="16" ry="7" fill="#d8b4a8" opacity="0.55" filter="url(#b2)"/><rect x="244" y="84" width="84" height="5" fill="#8a5a40" opacity="0.5" filter="url(#b1)"/>
<path d="M226 70 L170 76 L170 99 L226 104z" fill="#0c0806"/>
<path d="M226 70 L170 76 L170 78.500 L226 73z" fill="#6a3c20" opacity="0.9"/>
<path d="M226 104 L170 99 L170 96.500 L226 101z" fill="#6a3c20" opacity="0.9"/>
<g fill="#e8e8e8"><circle cx="265.9" cy="87.0" r="0.700"/><circle cx="265.6" cy="92.0" r="0.700"/><circle cx="264.7" cy="96.9" r="0.700"/><circle cx="263.2" cy="101.6" r="0.700"/><circle cx="261.2" cy="106.2" r="0.700"/><circle cx="258.6" cy="110.5" r="0.700"/><circle cx="255.5" cy="114.4" r="0.700"/><circle cx="252.0" cy="117.9" r="0.700"/><circle cx="248.1" cy="121.0" r="0.700"/><circle cx="201.1" cy="121.0" r="0.700"/><circle cx="197.2" cy="117.9" r="0.700"/><circle cx="193.7" cy="114.4" r="0.700"/><circle cx="190.6" cy="110.5" r="0.700"/><circle cx="188.0" cy="106.2" r="0.700"/><circle cx="186.0" cy="101.6" r="0.700"/><circle cx="184.5" cy="96.9" r="0.700"/><circle cx="183.6" cy="92.0" r="0.700"/><circle cx="183.3" cy="87.0" r="0.700"/><circle cx="183.6" cy="82.0" r="0.700"/><circle cx="184.5" cy="77.1" r="0.700"/><circle cx="186.0" cy="72.4" r="0.700"/><circle cx="188.0" cy="67.8" r="0.700"/><circle cx="190.6" cy="63.5" r="0.700"/><circle cx="193.7" cy="59.6" r="0.700"/><circle cx="197.2" cy="56.1" r="0.700"/><circle cx="201.1" cy="53.0" r="0.700"/><circle cx="205.4" cy="50.4" r="0.700"/><circle cx="210.0" cy="48.4" r="0.700"/><circle cx="214.7" cy="46.9" r="0.700"/><circle cx="219.6" cy="46.0" r="0.700"/><circle cx="224.6" cy="45.7" r="0.700"/><circle cx="229.6" cy="46.0" r="0.700"/><circle cx="234.5" cy="46.9" r="0.700"/><circle cx="239.2" cy="48.4" r="0.700"/><circle cx="243.8" cy="50.4" r="0.700"/><circle cx="248.1" cy="53.0" r="0.700"/><circle cx="252.0" cy="56.1" r="0.700"/><circle cx="255.5" cy="59.6" r="0.700"/><circle cx="258.6" cy="63.5" r="0.700"/><circle cx="261.2" cy="67.8" r="0.700"/><circle cx="263.2" cy="72.4" r="0.700"/><circle cx="264.7" cy="77.1" r="0.700"/><circle cx="265.6" cy="82.0" r="0.700"/><circle cx="244" cy="87" r="0.700"/><circle cx="247.2" cy="87" r="0.700"/><circle cx="250.39999999999998" cy="87" r="0.700"/><circle cx="253.59999999999997" cy="87" r="0.700"/><circle cx="256.79999999999995" cy="87" r="0.700"/><circle cx="259.99999999999994" cy="87" r="0.700"/><circle cx="263.19999999999993" cy="87" r="0.700"/><circle cx="266.3999999999999" cy="87" r="0.700"/><circle cx="269.5999999999999" cy="87" r="0.700"/><circle cx="272.7999999999999" cy="87" r="0.700"/><circle cx="275.9999999999999" cy="87" r="0.700"/><circle cx="279.1999999999999" cy="87" r="0.700"/><circle cx="282.39999999999986" cy="87" r="0.700"/><circle cx="285.59999999999985" cy="87" r="0.700"/><circle cx="288.79999999999984" cy="87" r="0.700"/><circle cx="291.99999999999983" cy="87" r="0.700"/><circle cx="295.1999999999998" cy="87" r="0.700"/><circle cx="298.3999999999998" cy="87" r="0.700"/><circle cx="301.5999999999998" cy="87" r="0.700"/><circle cx="304.7999999999998" cy="87" r="0.700"/><circle cx="307.9999999999998" cy="87" r="0.700"/><circle cx="311.19999999999976" cy="87" r="0.700"/><circle cx="314.39999999999975" cy="87" r="0.700"/><circle cx="317.59999999999974" cy="87" r="0.700"/><circle cx="320.7999999999997" cy="87" r="0.700"/><circle cx="323.9999999999997" cy="87" r="0.700"/></g>
<circle cx="224.600" cy="87" r="17.200" fill="url(#earth)"/>
<path d="M214 76 Q222 72 230 75 Q238 80 236 88 Q232 92 228 88 Q224 84 218 86 Q212 84 214 76z M216 92 Q224 90 230 96 Q228 102 222 103 Q214 100 216 92z" fill="#34d08a"/>


<g transform="translate(193,58) rotate(-35)" fill="#f4f4f0"><rect x="-10" y="-1" width="20" height="2"/><rect x="-9" y="-5" width="4" height="10"/><rect x="-4" y="-4" width="3" height="8"/><rect x="5" y="-3" width="1.500" height="6"/></g>
</g>
<rect x="343" y="0" width="25" height="123" fill="#000"/>
<!-- top-right photo -->
<g clip-path="url(#cpt)">
<rect x="334" y="0" width="34" height="72" fill="#bcb8ac"/>
<rect x="334" y="0" width="34" height="5" fill="#8a8678" filter="url(#b1)"/>
<rect x="341" y="5" width="18" height="34" fill="#d4cfbe" filter="url(#b1)"/>
<rect x="337" y="8" width="3.500" height="32" fill="#4e4a40" filter="url(#b1)"/>
<rect x="345" y="9" width="9" height="4" fill="#a89c6c" filter="url(#b1)"/>
<rect x="346" y="17" width="5" height="8" fill="#8e8a7c" filter="url(#b1)"/>
<rect x="359" y="6" width="3" height="36" fill="#6a665a" filter="url(#b1)"/>
<rect x="362" y="0" width="6" height="50" fill="#dcdcd8" filter="url(#b1)"/>
<rect x="343" y="43" width="10" height="5" fill="#b0a478" filter="url(#b1)"/>
<rect x="336" y="42" width="6" height="8" fill="#5e5a50" filter="url(#b1)"/>
<path d="M334 52 L368 48 L368 72 L334 72z" fill="#dadad8" filter="url(#b1)"/>
<path d="M340 58 L352 54 L360 60 L350 66z" fill="#a8a8a4" filter="url(#b1)"/>
<path d="M356 62 L368 58 L368 66 L360 68z" fill="#8e8e8a" filter="url(#b1)"/>
</g>
<g clip-path="url(#cpr)"><g fill="#ff6a18"><polygon points="400.5,85.8 407.4,89.5 400.1,92.3"/><polygon points="399.8,94.1 405.6,99.3 397.8,100.3"/><polygon points="397.1,102.0 401.5,108.5 393.7,107.6"/><polygon points="392.6,109.0 395.4,116.3 388.0,113.6"/><polygon points="386.6,114.7 387.5,122.5 381.0,118.1"/><polygon points="379.4,118.8 378.4,126.6 373.1,120.8"/><polygon points="371.4,121.1 368.5,128.4 364.8,121.5"/><polygon points="363.0,121.4 358.5,127.8 356.6,120.2"/><polygon points="354.9,119.7 349.0,124.9 348.9,117.0"/><polygon points="347.4,116.1 340.4,119.7 342.3,112.0"/><polygon points="341.0,110.8 333.3,112.6 337.0,105.6"/><polygon points="336.0,104.1 328.2,104.0 333.3,98.1"/><polygon points="332.8,96.4 325.2,94.5 331.6,90.0"/><polygon points="331.5,88.2 324.6,84.5 331.9,81.7"/><polygon points="332.2,79.9 326.4,74.7 334.2,73.7"/><polygon points="334.9,72.0 330.5,65.5 338.3,66.4"/><polygon points="339.4,65.0 336.6,57.7 344.0,60.4"/><polygon points="345.4,59.3 344.5,51.5 351.0,55.9"/><polygon points="352.6,55.2 353.6,47.4 358.9,53.2"/><polygon points="360.6,52.9 363.5,45.6 367.2,52.5"/><polygon points="369.0,52.6 373.5,46.2 375.4,53.8"/><polygon points="377.1,54.3 383.0,49.1 383.1,57.0"/><polygon points="384.6,57.9 391.6,54.3 389.7,62.0"/><polygon points="391.0,63.2 398.7,61.4 395.0,68.4"/><polygon points="396.0,69.9 403.8,70.0 398.7,75.9"/><polygon points="399.2,77.6 406.8,79.5 400.4,84.0"/></g><circle cx="366" cy="87" r="35" fill="url(#sun)"/></g>
<!-- white lines -->
<rect x="0" y="61.500" width="368" height="1.200" fill="#e8e8e8"/>
<rect x="136.500" y="0" width="1.200" height="123" fill="#e8e8e8"/>
<rect x="272.500" y="0" width="1.200" height="123" fill="#e8e8e8"/>
</svg>
<svg style="position:absolute;left:140px;top:118px" width="150" height="36" viewBox="0 0 150 36">
<text x="6" y="23.800" font-family="Liberation Sans, sans-serif" font-weight="bold" font-size="23" textLength="107" lengthAdjust="spacingAndGlyphs" fill="#a4acb4" fill-opacity="0.55" stroke="#d0d8e0" stroke-opacity="0.35" stroke-width="1.200">download</text>
<circle cx="129.100" cy="14.800" r="12.300" fill="#c8c8c8" fill-opacity="0.5" stroke="#e0e0e0" stroke-opacity="0.4" stroke-width="1"/>
<text x="129.100" y="21" font-family="Liberation Sans, sans-serif" font-weight="bold" font-size="16" text-anchor="middle" fill="#b4b4b4" fill-opacity="0.7">3K</text>
</svg>
 <span class="bc" style="left:205px;top:250.700px;letter-spacing:-0.26px">+ NASA Home</span><span class="bc" style="left:276.600px;top:250.700px;color:#000">&gt;</span><span class="bc" style="left:285.300px;top:250.700px;letter-spacing:-0.09px">Mission Sections</span><span class="bc" style="left:369.600px;top:250.700px;color:#000">&gt;</span><span class="bc" style="left:378.600px;top:250.700px;letter-spacing:-0.16px">International Space Station</span><span class="bc" style="left:509.400px;top:250.700px;color:#000;letter-spacing:-0.1px">&gt; Multimedia</span>
 <span style="left:209px;top:286px;font-size:12.500px;line-height:14px;font-weight:bold;color:#1b6a9e;transform-origin:0 50%;transform:scaleX(0.775)">IMAGES</span>
 <div style="left:209px;top:300px;width:360px;height:1px;background:#ccc"></div>
 <div id="gimg" style="left:214px;top:315px;width:216px;height:60px;border:1px solid #000;background:#ebebee;overflow:hidden"><svg style="position:absolute;left:0;top:0" width="214" height="58" viewBox="0 0 214 58">
<defs><filter id="gb" x="-20%" y="-20%" width="140%" height="140%"><feGaussianBlur stdDeviation="0.8"/></filter><filter id="gb2" x="-20%" y="-20%" width="140%" height="140%"><feGaussianBlur stdDeviation="3"/></filter></defs>
<rect width="214" height="58" fill="#ececef"/>
<ellipse cx="40" cy="20" rx="30" ry="10" fill="#dcdce2" filter="url(#gb2)"/>
<ellipse cx="170" cy="12" rx="40" ry="8" fill="#f6f6f8" filter="url(#gb2)"/>
<ellipse cx="120" cy="34" rx="30" ry="6" fill="#d6d6dc" filter="url(#gb2)"/>
<path d="M0 0 L10 0 L6 14 L10 30 L4 38 L0 38z" fill="#b4b4bc" filter="url(#gb)"/>
<path d="M13 0 L17 0 L8 26 L5 26z" fill="#a88850" filter="url(#gb)"/>
<path d="M2 26 L10 34 L8 38 L0 30z" fill="#8a7a58" filter="url(#gb)"/>
<path d="M8 34 L40 30 L50 38 L50 58 L8 58z" fill="#d4d6dc" filter="url(#gb)"/>
<rect x="60.500" y="15.500" width="31" height="11.500" fill="#a39880" filter="url(#gb)"/>
<g stroke="#d8d2c4" stroke-width="0.800"><path d="M66 15v12M72 15v12M78 15v12M84 15v12"/></g>
<rect x="114.500" y="10.500" width="38" height="11.500" fill="#a39880" filter="url(#gb)"/>
<g stroke="#d8d2c4" stroke-width="0.800"><path d="M120 10v12M126 10v12M132 10v12M138 10v12M144 10v12"/></g>
<path d="M93 8 Q93 3 104 3 Q116 3 116 8 L115 18 L94 18z" fill="#c8c8ce" stroke="#88888e" stroke-width="0.600"/>
<rect x="94" y="6" width="21" height="2" fill="#70707a"/>
<path d="M94 17 L113 17 L112 40 L94 40z" fill="#3c3038" filter="url(#gb)"/>
<path d="M98 22 h8 v6 h-8z" fill="#5a4a48" filter="url(#gb)"/>
<path d="M108 40 Q110 22 130 20 Q150 19 158 28 L162 40z" fill="#f4f4f6" stroke="#a8a8b0" stroke-width="0.600"/>
<path d="M112 40 Q116 28 132 27 L146 40z" fill="#c4c4cc" filter="url(#gb)"/>
<path d="M146 24 L152 40 L158 40 L154 26z" fill="#6a6a74" filter="url(#gb)"/>
</svg></div>
 <span style="left:434px;top:316px;font-size:11px;line-height:13px;font-weight:bold;color:#000;letter-spacing:0.27px">Image and Video Galleries</span>
 <span class="bc" style="left:434.700px;top:343.400px;letter-spacing:-0.12px">+ Searchable Gallery</span>
</div>
<div class="sbv"></div>
<div class="sbh"></div>
<div style="left:726px;top:492px;width:17px;height:17px;background:#f0f0f0"></div>
<div class="thv"></div>
<div class="thh"></div>
<svg style="position:absolute;left:730px;top:142px" width="10" height="8" viewBox="0 0 10 8"><path d="M1.200 7 L5 2.600 L8.800 7z" fill="#383838"/></svg>
<svg style="position:absolute;left:730px;top:480px" width="10" height="8" viewBox="0 0 10 8"><path d="M1.200 1 L5 5.400 L8.800 1z" fill="#383838"/></svg>
<svg style="position:absolute;left:169px;top:496px" width="6" height="9" viewBox="0 0 6 9"><path d="M5.200 0.700 L0.800 4.500 L5.200 8.300z" fill="#383838"/></svg>
<svg style="position:absolute;left:715px;top:496px" width="6" height="9" viewBox="0 0 6 9"><path d="M0.800 0.700 L5.200 4.500 L0.800 8.300z" fill="#383838"/></svg>
<div style="left:730px;top:180px;width:8px;height:1px;background:#5a5a5a;box-shadow:0 3px 0 #5a5a5a,0 6px 0 #5a5a5a,0 1px 0 #fcfcfc,0 4px 0 #fcfcfc,0 7px 0 #fcfcfc"></div>
<div style="left:374px;top:497px;width:1px;height:7px;background:#5a5a5a;box-shadow:3px 0 0 #5a5a5a,6px 0 0 #5a5a5a,1px 0 0 #fcfcfc,4px 0 0 #fcfcfc,7px 0 0 #fcfcfc"></div>
<div style="left:162px;top:511px;width:584px;height:1px;background:#8e8e8e"></div>
<div id="status"></div>
<div style="left:201px;top:513px;width:1px;height:16px;background:#b8b8b8"></div>


<!--FRAME-->
<div id="frameL"></div><div id="frameT"></div><div id="frameT2"></div><div id="frameR"></div><div id="frameB"></div><div id="frameB2"></div>
<svg style="position:absolute;left:0;top:0" width="6" height="6" viewBox="0 0 6 6"><rect width="6" height="6" fill="#fff"/><path d="M0 6 L0 5 Q0 0 5 0 L6 0 L6 6z" fill="#1a1a1a"/><path d="M1 6 L1 5.500 Q1 1 5.500 1 L6 1 L6 6z" fill="#f4f8fc"/><path d="M2 6 Q2 2 6 2 L6 6z" fill="#9ab5d5"/></svg>
<svg style="position:absolute;left:751px;top:0" width="6" height="6" viewBox="0 0 6 6"><rect width="6" height="6" fill="#fff"/><path d="M6 6 L6 5 Q6 0 1 0 L0 0 L0 6z" fill="#1a1a1a"/><path d="M5 6 L5 5.500 Q5 1 0.500 1 L0 1 L0 6z" fill="#bfeaf8"/><path d="M4 6 Q4 2 0 2 L0 6z" fill="#9ab5d5"/></svg>
</body>
</html>
